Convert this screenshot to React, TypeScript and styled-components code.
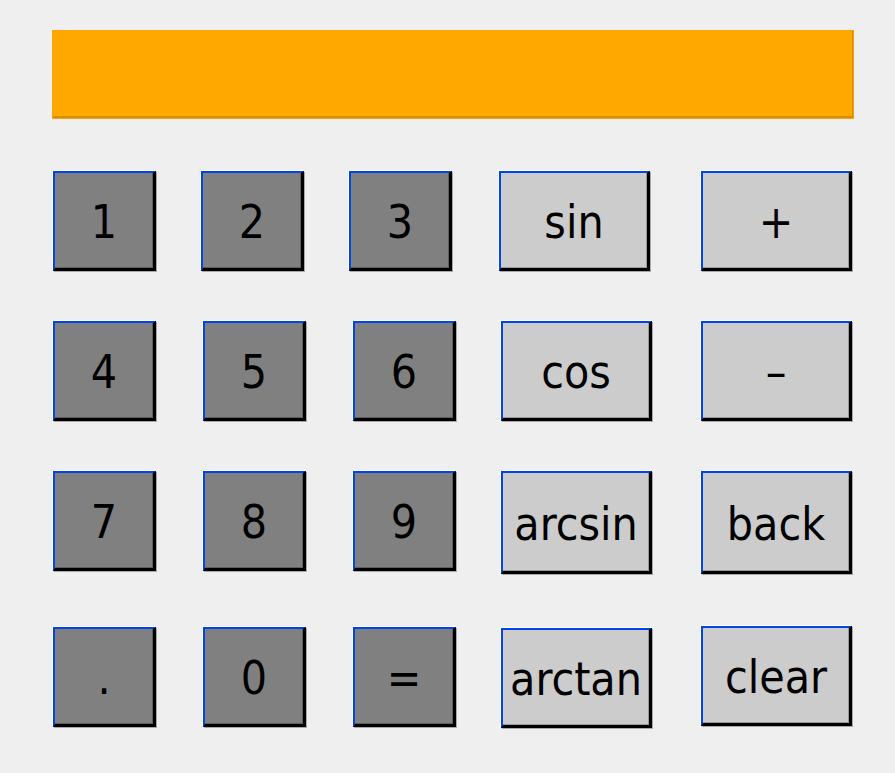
import React from "react";
import styled, { createGlobalStyle } from "styled-components";

const GlobalStyle = createGlobalStyle`
  html, body {
    margin: 0;
    padding: 0;
    background: #efefef;
  }
`;

interface KeyDef {
  label: string;
  kind: "digit" | "func";
  dx?: number;
  dy?: number;
  tall?: boolean;
}

const Page = styled.div`
  width: 895px;
  height: 773px;
  box-sizing: border-box;
  padding: 30px 0 0 52px;
  background: #efefef;
  font-family: "DejaVu Sans Condensed", "DejaVu Sans", sans-serif;
`;

const Display = styled.div`
  width: 802px;
  height: 89px;
  box-sizing: border-box;
  background: #ffa800;
  border-top: 1px solid #ffa200;
  border-left: 1px solid #ffa200;
  border-right: 1px solid #f7a000;
  border-bottom: 1px solid #ffa500;
  box-shadow: inset -1px -2px 0 #d88c00;
`;

const Keypad = styled.div`
  margin-top: 51px;
  display: grid;
  grid-template-columns: 150px 150px 148px 200px 152px;
  grid-template-rows: 150px 150px 156px 101px;
  align-items: start;
  justify-items: start;
`;

const Key = styled.button<{ $kind: "digit" | "func"; $dx: number; $dy: number; $tall: boolean }>`
  width: ${({ $kind }) => ($kind === "digit" ? "103px" : "151px")};
  height: ${({ $tall }) => ($tall ? "103px" : "100px")};
  margin: ${({ $dy, $dx }) => `${$dy + 1}px 0 0 ${$dx + 1}px`};
  box-sizing: border-box;
  padding: 3px 0 0;
  background: ${({ $kind }) => ($kind === "digit" ? "#808080" : "#cccccc")};
  border-style: solid;
  border-width: 2px 3px 3px 2px;
  border-color: #0046e6 #000000 #000000 #0046e6;
  box-shadow: -1px -1px 0 #ffffff, 1px 1px 0 #a8a8a8,
    inset -1px -1px 0 ${({ $kind }) => ($kind === "digit" ? "#5e5e5e" : "#9a9a9a")};
  font-family: inherit;
  font-size: 46px;
  line-height: 1;
  color: #000000;
  display: flex;
  align-items: center;
  justify-content: center;
  cursor: pointer;
`;

const keys: KeyDef[] = [
  { label: "1", kind: "digit" },
  { label: "2", kind: "digit", dx: -2 },
  { label: "3", kind: "digit", dx: -4 },
  { label: "sin", kind: "func", dx: -2 },
  { label: "+", kind: "func" },
  { label: "4", kind: "digit" },
  { label: "5", kind: "digit" },
  { label: "6", kind: "digit" },
  { label: "cos", kind: "func" },
  { label: "–", kind: "func" },
  { label: "7", kind: "digit" },
  { label: "8", kind: "digit" },
  { label: "9", kind: "digit" },
  { label: "arcsin", kind: "func", tall: true },
  { label: "back", kind: "func", tall: true },
  { label: ".", kind: "digit" },
  { label: "0", kind: "digit" },
  { label: "=", kind: "digit" },
  { label: "arctan", kind: "func", dy: 1 },
  { label: "clear", kind: "func", dy: -1 },
];

const App: React.FC = () => {
  return (
    <>
      <GlobalStyle />
      <Page>
        <Display />
        <Keypad>
          {keys.map((k) => (
            <Key
              key={k.label}
              $kind={k.kind}
              $dx={k.dx ?? 0}
              $dy={k.dy ?? 0}
              $tall={!!k.tall}
            >
              {k.label}
            </Key>
          ))}
        </Keypad>
      </Page>
    </>
  );
};

export default App;
